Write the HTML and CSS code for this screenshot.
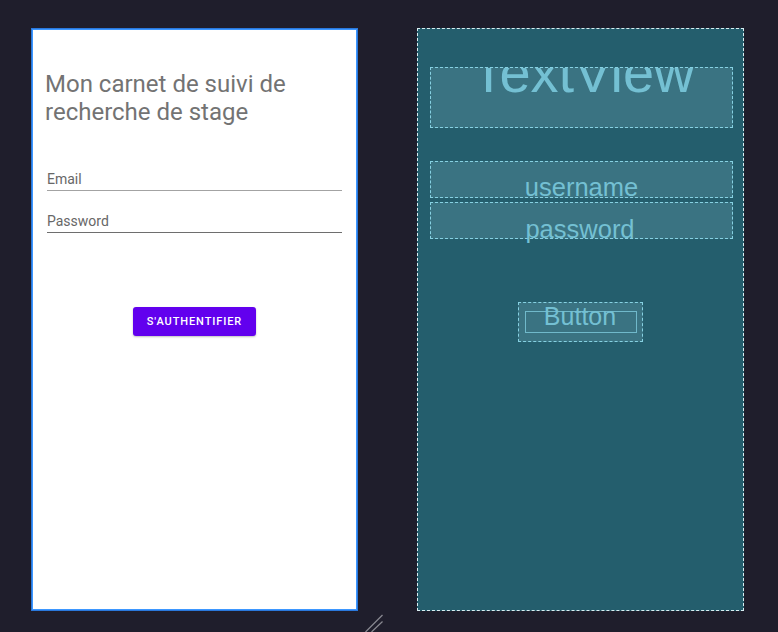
FILE: index.html
```html
<!DOCTYPE html>
<html lang="fr">
<head>
<meta charset="utf-8">
<title>Layout preview</title>
<link rel="stylesheet" href="styles.css">
</head>
<body>
<div class="canvas">
  <section class="device design">
    <h1 class="title">Mon carnet de suivi de recherche de stage</h1>
    <div class="field field-email"><span class="label">Email</span></div>
    <div class="field field-password"><span class="label">Password</span></div>
    <button class="auth-btn" type="button">S'AUTHENTIFIER</button>
  </section>
  <section class="device blueprint">
    <div class="bp-box bp-textview"><span class="bp-big">TextView</span></div>
    <div class="bp-box bp-input bp-username">username</div>
    <div class="bp-box bp-input bp-password">password</div>
    <div class="bp-box bp-button">
      <span class="bp-button-inner"></span>
      <span class="bp-button-text">Button</span>
    </div>
  </section>
  <svg class="resize-handle" width="20" height="20" viewBox="0 0 20 20">
    <line x1="0.5" y1="19" x2="17.5" y2="2" stroke="#8a8a92" stroke-width="1.2"/>
    <line x1="6.5" y1="19" x2="17.5" y2="8.5" stroke="#8a8a92" stroke-width="1.2"/>
  </svg>
</div>
</body>
</html>
```

FILE: styles.css
```css
html, body {
  margin: 0;
  padding: 0;
  background: #1f1e2c;
  width: 778px;
  height: 632px;
  overflow: hidden;
}

.canvas {
  position: relative;
  display: flex;
  align-items: flex-start;
  gap: 59px;
  padding: 28px 0 0 31px;
  height: 632px;
  box-sizing: border-box;
}

.device {
  width: 327px;
  height: 583px;
  box-sizing: border-box;
  display: flex;
  flex-direction: column;
}

/* Design view */
.design {
  background: #ffffff;
  border: 1px solid #2a78dc;
  box-shadow: inset 0 0 0 1px #3d97ff;
  padding: 0 15px 0 11px;
  font-family: Roboto, "Liberation Sans", sans-serif;
}

.title {
  margin: 41px 0 0 2px;
  font-size: 24px;
  font-weight: 400;
  line-height: 28px;
  color: #737373;
  padding-right: 40px;
}

.field {
  margin-left: 4px;
  height: 20px;
  box-sizing: border-box;
  padding-bottom: 3px;
  border-bottom: 1px solid #a3a3a3;
}

.field-email {
  margin-top: 45px;
}

.field-password {
  margin-top: 22px;
  border-bottom-color: #6e6e6e;
}

.label {
  display: block;
  font-size: 14px;
  line-height: 16px;
  color: #676767;
}

.auth-btn {
  align-self: center;
  margin: 74px 0 0 4px;
  width: 123px;
  height: 29px;
  border: none;
  border-radius: 3px;
  background: #6200ee;
  color: #ffffff;
  font-family: Roboto, "Liberation Sans", sans-serif;
  font-weight: 500;
  font-size: 11px;
  letter-spacing: 0.9px;
  padding: 0;
  box-shadow: 0 1px 2px rgba(0, 0, 0, 0.25);
}

/* Blueprint view */
.blueprint {
  background: #245e6d;
  border: 1px dashed #d9eef2;
  padding: 0 0 0 12px;
  font-family: "Liberation Sans", Arial, sans-serif;
  color: #74c0d3;
}

.bp-box {
  box-sizing: border-box;
  background: #3a7382;
  border: 1px dashed #86d1e2;
}

.bp-textview {
  width: 303px;
  height: 61px;
  margin-top: 38px;
  overflow: hidden;
  text-align: center;
  padding-left: 3px;
}

.bp-big {
  display: block;
  margin-top: -23px;
  font-size: 56px;
  line-height: 56px;
}

.bp-input {
  width: 303px;
  height: 37px;
  font-size: 25.5px;
  line-height: 25px;
  text-align: center;
}

.bp-username {
  margin-top: 33px;
  padding-top: 13px;
}

.bp-password {
  margin-top: 4px;
  padding-top: 14px;
  padding-right: 3px;
}

.bp-button {
  align-self: flex-start;
  margin: 63px 0 0 88px;
  width: 125px;
  height: 40px;
  display: grid;
}

.bp-button-inner,
.bp-button-text {
  grid-area: 1 / 1;
}

.bp-button-inner {
  margin: 8px 5px 8px 6px;
  border: 1px solid #70b9cb;
}

.bp-button-text {
  justify-self: center;
  align-self: start;
  font-size: 25px;
  line-height: 25px;
  padding-top: 1px;
  margin-left: -1px;
}

.resize-handle {
  position: absolute;
  left: 365px;
  top: 613px;
}
```
